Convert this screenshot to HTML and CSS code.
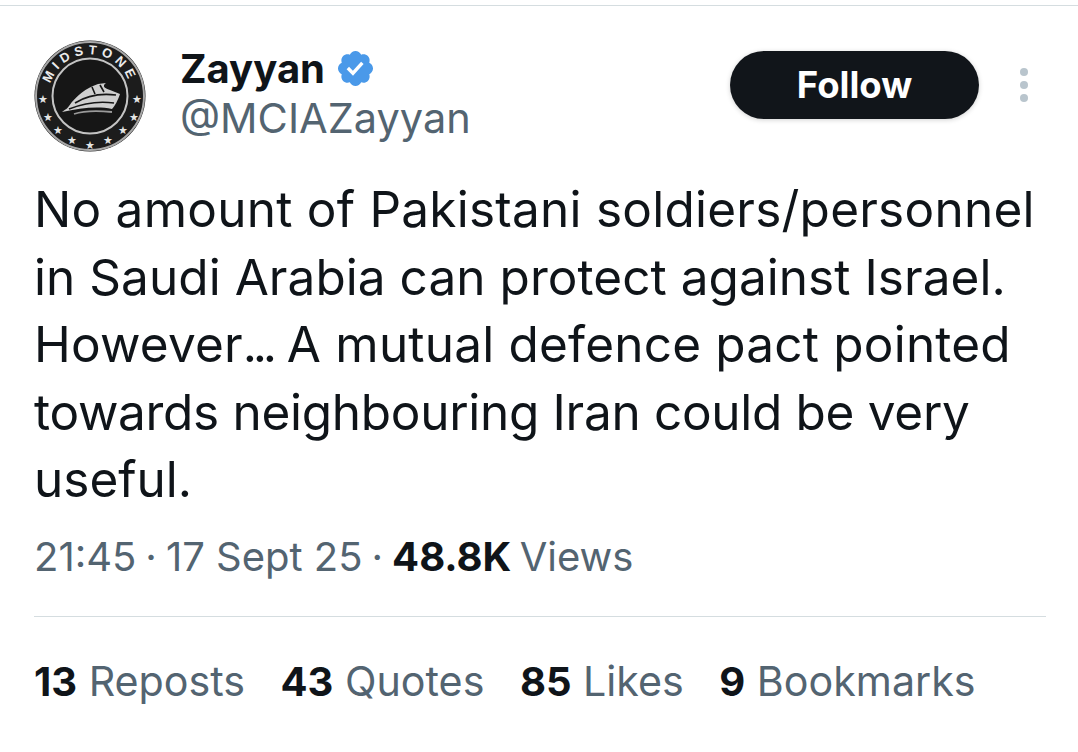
FILE: index.html
```html
<!DOCTYPE html>
<html lang="en">
<head>
<meta charset="utf-8">
<title>Zayyan</title>
<link rel="stylesheet" href="styles.css">
</head>
<body>
<main class="tweet">
  <header class="head">
    <svg class="avatar" viewBox="0 0 116 116" aria-label="Midstone logo">
      <defs><path id="arc" d="M19.5 73 A41.4 41.4 0 1 1 96.5 73"/></defs>
      <circle cx="58" cy="58" r="55.5" fill="#1c1c1c"/>
      <circle cx="58" cy="58" r="54" fill="none" stroke="#a8a8a8" stroke-width="2"/>
      <circle cx="58" cy="58" r="37.5" fill="#161616" stroke="#c4c4c4" stroke-width="2"/>
      <text class="arc-text"><textPath href="#arc" startOffset="50%" text-anchor="middle">MIDSTONE</textPath></text>
      <g class="stars" text-anchor="middle">
        <text x="11" y="65">★</text><text x="16" y="83">★</text><text x="26" y="96">★</text><text x="40" y="106">★</text><text x="58" y="111">★</text><text x="76" y="106">★</text><text x="91" y="96">★</text><text x="102" y="83">★</text><text x="105" y="65">★</text>
      </g>
      <path fill="#cfcfcf" d="M37 68 C44 58 54 50 66 46 L74 45 C70 48 72 50 78 52 L88 56 C86 62 83 68 80 71 C66 68 48 70 30 74 C34 71 36 70 37 68 Z"/>
      <path fill="none" stroke="#161616" stroke-width="1.6" d="M43 65 C54 58 68 55 84 57 M37 71 C52 65 68 63 82 65 M60 49 L63 56 M68 47 L72 54"/>
      <path fill="none" stroke="#9a9a9a" stroke-width="1.8" d="M42 76 C54 72 70 73 80 74"/>
    </svg>
    <div class="names">
      <div class="name-row">
        <span class="name">Zayyan</span>
        <svg class="badge" viewBox="0 0 24 24"><path fill="#4a99e9" d="M22.25 12c0-1.43-.88-2.67-2.19-3.34.46-1.39.2-2.9-.81-3.91s-2.52-1.27-3.91-.81c-.66-1.31-1.91-2.19-3.34-2.19s-2.67.88-3.33 2.19c-1.4-.46-2.91-.2-3.92.81s-1.26 2.52-.8 3.91c-1.31.67-2.2 1.91-2.2 3.34s.89 2.67 2.2 3.34c-.46 1.39-.21 2.9.8 3.91s2.52 1.26 3.91.81c.67 1.31 1.91 2.19 3.34 2.19s2.68-.88 3.34-2.19c1.39.45 2.9.2 3.91-.81s1.27-2.52.81-3.91c1.31-.67 2.19-1.91 2.19-3.34z"/><path fill="#fff" d="M10.54 16.2 6.8 12.46l1.41-1.42 2.26 2.26 4.8-5.23 1.47 1.36z"/></svg>
      </div>
      <div class="handle">@MCIAZayyan</div>
    </div>
    <button class="follow">Follow</button>
    <div class="more"><i></i><i></i><i></i></div>
  </header>
  <p class="body"><span class="l1">No amount of Pakistani soldiers/personnel</span><br><span class="l2">in Saudi Arabia can protect against Israel.</span><br><span class="l3">However<span class="dots">...</span> A mutual defence pact pointed</span><br><span class="l4">towards neighbouring Iran could be very</span><br>useful.</p>
  <div class="meta">21:45<span class="dot">·</span>17 Sept 25<span class="dot">·</span><b>48.8K</b> <span class="views">Views</span></div>
  <div class="stats">
    <span><b>13</b> Reposts</span>
    <span><b>43</b> Quotes</span>
    <span><b>85</b> Likes</span>
    <span><b>9</b> Bookmarks</span>
  </div>
</main>
</body>
</html>
```
FILE: styles.css
```css
* { box-sizing: border-box; }
html, body { margin: 0; background: #fff; }
body { width: 1078px; height: 752px; overflow: hidden; font-family: Inter, sans-serif; color: #0f1419; }
.tweet { border-top: 1px solid #d5dde0; margin-top: 5px; padding: 36px 32px 0 34px; }
.head { display: flex; align-items: flex-start; height: 112px; }
.avatar { width: 116px; height: 116px; flex: none; margin: -4px 0 0 -2px; }
.arc-text { font: 700 13px "Liberation Sans", sans-serif; letter-spacing: 4.6px; fill: #ececec; }
.stars { font: 11px "DejaVu Sans", sans-serif; fill: #e4e4e4; }
.names { margin-left: 32px; flex: 1; }
.name-row { display: flex; align-items: center; gap: 10px; height: 52px; }
.name { font-size: 40px; font-weight: 700; }
.badge { width: 41px; height: 41px; }
.handle { font-size: 41.5px; line-height: 48px; color: #536471; }
.follow { width: 249px; height: 68px; margin-top: 9px; border: 0; border-radius: 34px; background: #11151a; color: #fff; font: 700 36.5px/68px Inter, sans-serif; padding: 0 0 2px; box-shadow: 0 1px 5px rgba(0,0,0,.18); }
.more { display: flex; flex-direction: column; gap: 5px; margin: 26px 18px 0 41px; }
.more i { width: 8px; height: 8px; border-radius: 50%; background: #b9c5cd; }
.body { margin: 22px 0 0; font-size: 49.5px; line-height: 67.5px; }
.l1 { letter-spacing: .24px; }
.l2 { letter-spacing: .05px; }
.l3 { letter-spacing: .2px; }
.l4 { letter-spacing: -.3px; }
.dots { letter-spacing: -4.3px; }
.meta { margin-top: 12px; padding-bottom: 28px; font-size: 40px; line-height: 62px; color: #536471; border-bottom: 1px solid #d5dde0; }
.dot { margin: 0 9px; }
.meta b { margin-right: -3px; }
.meta b, .stats b { color: #0f1419; font-weight: 700; }
.stats { display: flex; gap: 35.5px; margin-top: 33px; font-size: 41.2px; line-height: 62px; color: #536471; }
.stats b { font-size: 40px; }
```
